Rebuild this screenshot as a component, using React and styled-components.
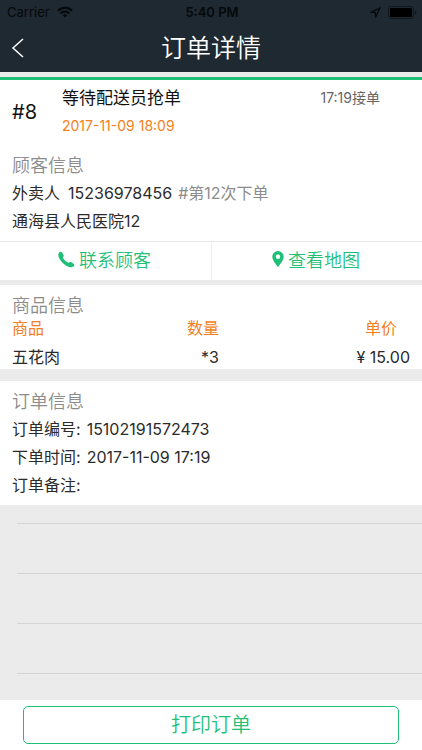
import React from 'react';
import styled, { createGlobalStyle } from 'styled-components';

const GREEN = '#1fbf78';
const ORANGE = '#f47f20';
const GREY = '#8c8c8c';

const GlobalStyle = createGlobalStyle`
  *, *::before, *::after { box-sizing: border-box; }
  body {
    margin: 0;
    background: #ebebeb;
    color: #2b2b2b;
    font: 400 16px/28px Inter, "Noto Sans CJK SC", sans-serif;
  }
  h1, h2, p, ul, dl, dd { margin: 0; padding: 0; }
  h1, h2 { font-weight: 350; }
  button { font-family: inherit; cursor: pointer; }
`;

const Page = styled.div`
  min-height: 100vh;
  display: flex;
  flex-direction: column;
`;

const Header = styled.header`
  background: #1f2931;
  color: #fff;
`;

const StatusBar = styled.div`
  display: grid;
  grid-template-columns: 1fr auto 1fr;
  align-items: center;
  height: 24px;
  padding: 0 5px 0 7px;
  color: #05080b;
  font-size: 13px;
  line-height: 24px;
`;

const StatusGroup = styled.div`
  display: flex;
  align-items: center;
  justify-content: ${({ $end }) => ($end ? 'flex-end' : 'flex-start')};
  gap: 7px;
`;

const Clock = styled.time`
  font-weight: 600;
`;

const NavBar = styled.div`
  display: grid;
  grid-template-columns: 44px 1fr 44px;
  align-items: center;
  height: 48px;
`;

const BackButton = styled.button`
  display: flex;
  align-items: center;
  height: 44px;
  padding: 0 0 0 11px;
  border: 0;
  background: none;
  color: inherit;
`;

const Title = styled.h1`
  font-size: 25px;
  line-height: 48px;
  text-align: center;
`;

const Card = styled.section`
  padding: ${({ $pad }) => $pad || '0 12px'};
  margin-top: ${({ $gap }) => $gap || '0'};
  border-top: ${({ $accent }) => ($accent ? `3px solid ${GREEN}` : '0')};
  background: #fff;
`;

const Summary = styled.div`
  display: grid;
  grid-template-columns: 50px 1fr auto;
  align-items: center;
  padding: 4px 30px 0 0;
  color: #111;
`;

const OrderNumber = styled.span`
  grid-row: 1 / 3;
  font-size: 20px;
`;

const OrderState = styled.strong`
  font-size: 17px;
  font-weight: 400;
`;

const SmallTime = styled.time`
  color: ${({ $orange }) => ($orange ? ORANGE : '#666')};
  font-size: 14px;
`;

const SectionTitle = styled.h2`
  padding-top: ${({ $top }) => $top || '0'};
  color: ${GREY};
  font-size: 18px;
  line-height: 27px;
`;

const Line = styled.p`
  display: flex;
  gap: ${({ $gap }) => $gap || '6px'};
`;

const Muted = styled.span`
  color: ${GREY};
`;

const Actions = styled.div`
  display: grid;
  grid-template-columns: 1fr 1fr;
  background: #fff;
  border-top: 1px solid #e8e8e8;
`;

const Action = styled.button`
  display: flex;
  align-items: center;
  justify-content: center;
  gap: 4px;
  height: 38px;
  padding: 0 2px 4px 0;
  border: 0;
  background: none;
  color: ${GREEN};
  font-size: 18px;
  font-weight: 350;

  & + & { border-left: 1px solid #ececec; }
`;

const Goods = styled.table`
  width: 100%;
  border-collapse: collapse;

  th, td { padding: 0; text-align: right; font-weight: 400; }
  th { color: ${ORANGE}; line-height: 18px; padding-bottom: 8px; }
  td { line-height: 24px; }
  th:first-child, td:first-child { width: 28%; text-align: left; }
  th:nth-child(2) { width: 24%; }
  th:last-child { padding-right: 13px; }
`;

const Blank = styled.ul`
  flex: 1;
  padding: 18px 0 0 17px;
  list-style: none;
`;

const BlankRow = styled.li`
  height: 50px;
  border-top: 1px solid #d3d4d6;

  &:last-child { height: 27px; }
`;

const Footer = styled.footer`
  padding: 6px 23px;
  background: #fff;
`;

const PrintButton = styled.button`
  display: block;
  width: 100%;
  height: 38px;
  padding: 0;
  border: 1px solid ${GREEN};
  border-radius: 5px;
  background: #fff;
  color: ${GREEN};
  font-size: 20px;
  font-weight: 350;
  line-height: 36px;
`;

const WifiIcon = () => (
  <svg width="16" height="12" viewBox="0 0 16 12" fill="none" stroke="currentColor" strokeWidth="2.2" aria-hidden="true">
    <path d="M1 4.6a10 10 0 0 1 14 0M3.7 7.4a6.1 6.1 0 0 1 8.6 0" />
    <path d="M8 11.6 5.7 9.3a3.3 3.3 0 0 1 4.6 0z" fill="currentColor" stroke="none" />
  </svg>
);

const LocationIcon = () => (
  <svg width="11" height="11" viewBox="0 0 11 11" fill="none" stroke="currentColor" strokeWidth="1.2" aria-hidden="true">
    <path d="M10 1 1.2 5.1l4.2.5.4 4.2z" />
  </svg>
);

const BatteryIcon = () => (
  <svg width="29" height="13" viewBox="0 0 29 13" aria-hidden="true">
    <rect x=".5" y=".5" width="25" height="12" rx="2.5" fill="none" stroke="#10171d" />
    <rect x="2" y="2" width="22" height="9" rx="1" fill="#000" />
    <path d="M27 4.5c2 .6 2 3.4 0 4z" fill="#10171d" />
  </svg>
);

const BackIcon = () => (
  <svg width="14" height="20" viewBox="0 0 14 20" fill="none" stroke="currentColor" strokeWidth="1.5" aria-hidden="true">
    <path d="M12 1 2 10l10 9" />
  </svg>
);

const PhoneIcon = () => (
  <svg width="17" height="17" viewBox="0 0 17 17" fill="currentColor" aria-hidden="true">
    <path d="M1.200 1.600C2.300.600 3.400.500 4.100 1.500L5.400 3.800C5.900 4.700 5.700 5.200 5.200 5.900C4.900 6.300 4.900 6.700 5.200 7.200C6.300 9 8 10.500 10 11.500C10.500 11.700 10.900 11.700 11.300 11.400C12 10.900 12.600 10.800 13.400 11.300L15.500 12.700C16.500 13.400 16.500 14.300 15.600 15.200C14.500 16.300 13 16.600 11.100 15.900C6.600 14.300 2.500 10.400.700 5.900C.100 4.200.100 2.600 1.200 1.600z" />
  </svg>
);

const PinIcon = () => (
  <svg width="12" height="16" viewBox="0 0 12 16" fill="currentColor" aria-hidden="true">
    <path fillRule="evenodd" d="M6 0a5.700 5.700 0 0 1 5.700 5.700C11.700 9.400 7.600 13.800 6 16 4.400 13.800.300 9.400.300 5.700A5.700 5.700 0 0 1 6 0zm0 3.600a2.200 2.200 0 1 0 0 4.400 2.200 2.200 0 0 0 0-4.400z" />
  </svg>
);

const goods = [{ name: '五花肉', count: '*3', price: '¥ 15.00' }];

const details = [
  ['订单编号:', '15102191572473'],
  ['下单时间:', '2017-11-09 17:19'],
  ['订单备注:', ''],
];

export default function App() {
  return (
    <Page>
      <GlobalStyle />
      <Header>
        <StatusBar>
          <StatusGroup>Carrier<WifiIcon /></StatusGroup>
          <Clock>5:40 PM</Clock>
          <StatusGroup $end><LocationIcon /><BatteryIcon /></StatusGroup>
        </StatusBar>
        <NavBar>
          <BackButton type="button" aria-label="返回"><BackIcon /></BackButton>
          <Title>订单详情</Title>
        </NavBar>
      </Header>

      <Card $accent $gap="5px" $pad="0 12px 6px">
        <Summary>
          <OrderNumber>#8</OrderNumber>
          <OrderState>等待配送员抢单</OrderState>
          <SmallTime>17:19接单</SmallTime>
          <SmallTime $orange>2017-11-09 18:09</SmallTime>
        </Summary>
        <SectionTitle $top="12px">顾客信息</SectionTitle>
        <Line $gap="8px">
          <span>外卖人</span>
          <Line as="span">
            <span>15236978456</span>
            <Muted>#第12次下单</Muted>
          </Line>
        </Line>
        <Line>通海县人民医院12</Line>
      </Card>
      <Actions>
        <Action type="button"><PhoneIcon />联系顾客</Action>
        <Action type="button"><PinIcon />查看地图</Action>
      </Actions>

      <Card $gap="5px">
        <SectionTitle $top="7px">商品信息</SectionTitle>
        <Goods>
          <thead>
            <tr>
              <th scope="col">商品</th>
              <th scope="col">数量</th>
              <th scope="col">单价</th>
            </tr>
          </thead>
          <tbody>
            {goods.map((item) => (
              <tr key={item.name}>
                <td>{item.name}</td>
                <td>{item.count}</td>
                <td>{item.price}</td>
              </tr>
            ))}
          </tbody>
        </Goods>
      </Card>

      <Card $gap="12px" $pad="0 12px 6px">
        <SectionTitle $top="7px">订单信息</SectionTitle>
        {details.map(([label, value]) => (
          <Line key={label}>
            <span>{label}</span>
            <span>{value}</span>
          </Line>
        ))}
      </Card>

      <Blank aria-hidden="true">
        <BlankRow />
        <BlankRow />
        <BlankRow />
        <BlankRow />
      </Blank>

      <Footer>
        <PrintButton type="button">打印订单</PrintButton>
      </Footer>
    </Page>
  );
}
